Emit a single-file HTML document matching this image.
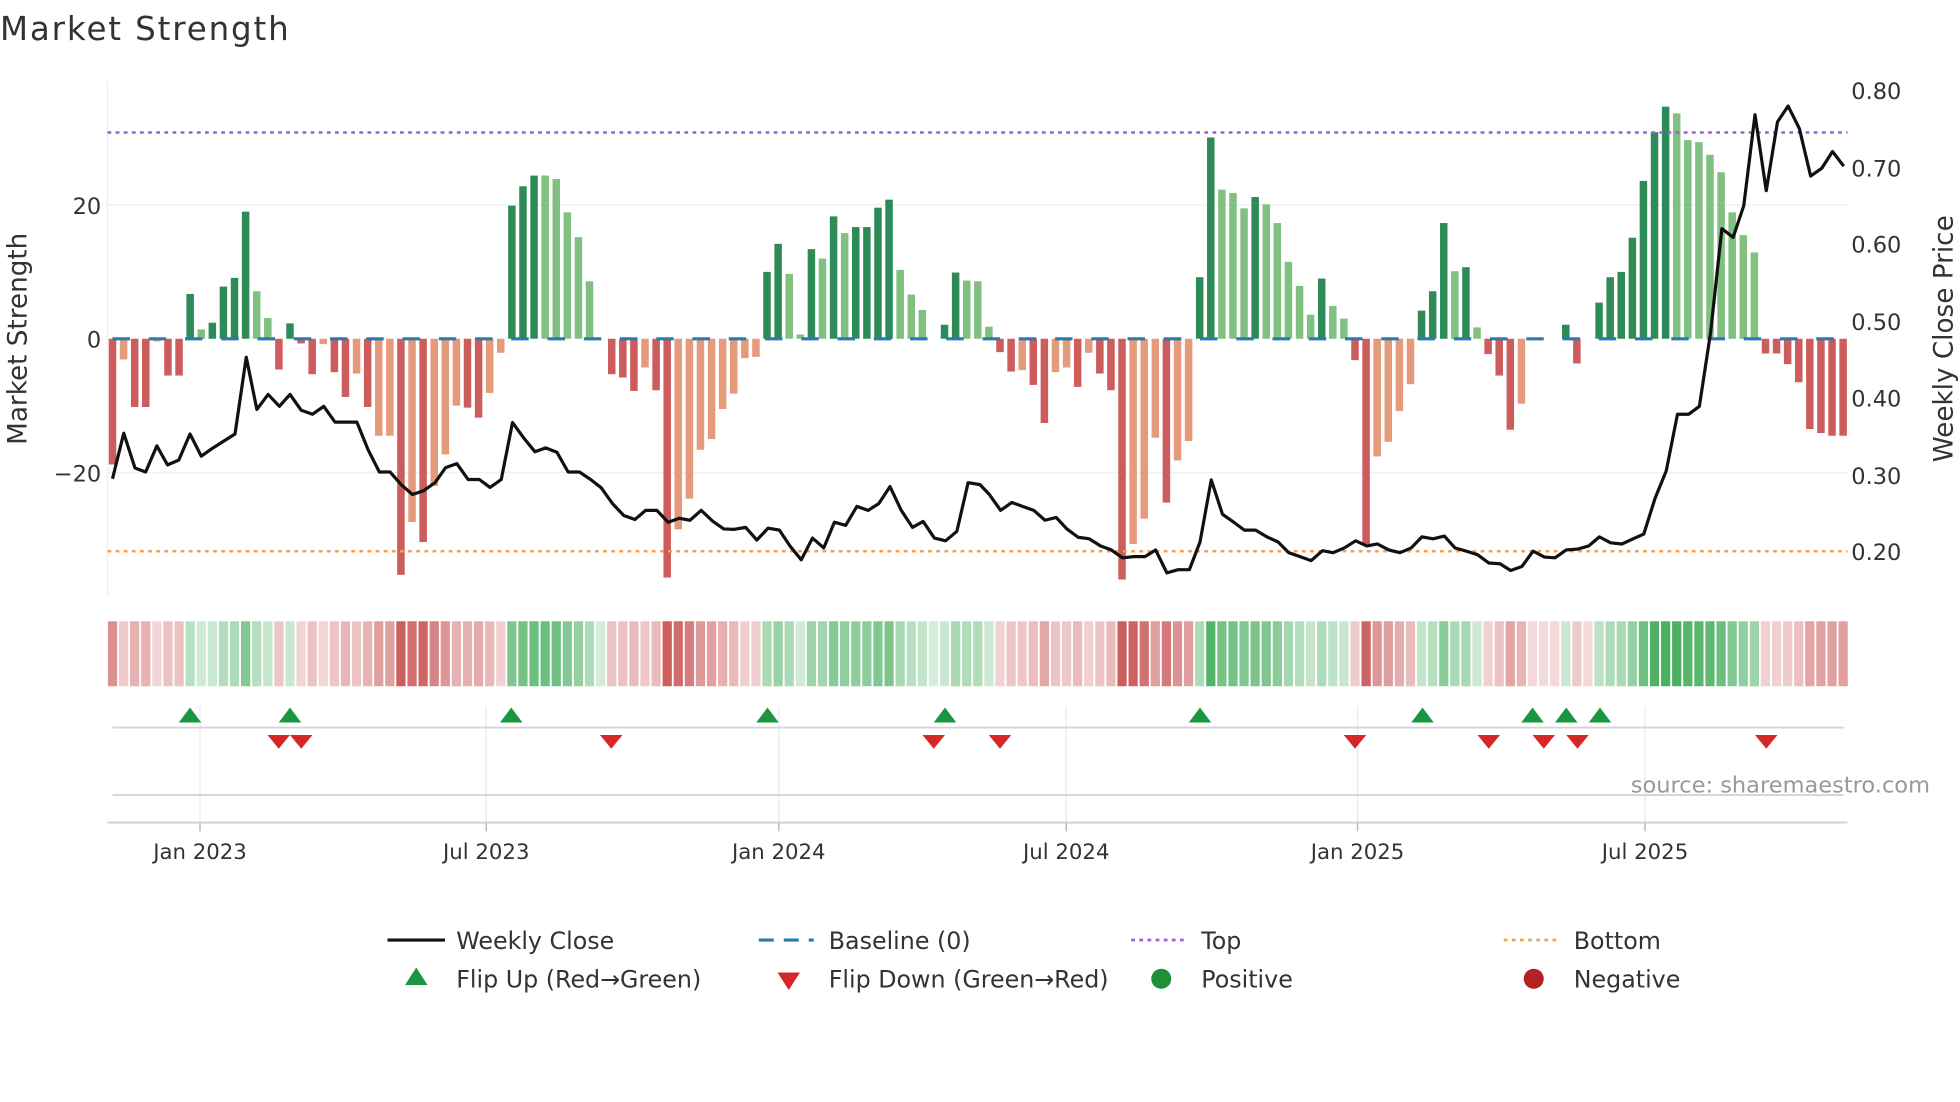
<!DOCTYPE html>
<html><head><meta charset="utf-8"><style>
html,body{margin:0;padding:0;background:#fff;width:1960px;height:1102px;overflow:hidden}
svg{display:block}
text{font-family:"DejaVu Sans","Liberation Sans",sans-serif;fill:#333}
</style></head><body>
<svg id="s" width="1960" height="1102" viewBox="0 0 1568 881.6" xmlns="http://www.w3.org/2000/svg">
<text x="0" y="32" font-size="26" textLength="231">Market Strength</text>
<g stroke="#eef0f3" stroke-width="1.2">
<line x1="86" y1="164" x2="1478" y2="164"/><line x1="86" y1="378" x2="1478" y2="378"/>
<line x1="86" y1="65" x2="86" y2="478"/>
</g>
<g id="bars"></g>
<line x1="86" y1="106" x2="1478" y2="106" stroke="#9b5fd6" stroke-width="2" stroke-dasharray="3,3.5"/>
<line x1="86" y1="441" x2="1478" y2="441" stroke="#f0a05a" stroke-width="2" stroke-dasharray="3,3.5"/>
<line x1="90" y1="271" x2="1478" y2="271" stroke="#2a7ab0" stroke-width="2.5" stroke-dasharray="14,15"/>
<g transform="scale(0.5 0.3165)">
<polyline fill="none" stroke="#111" stroke-width="3.2" vector-effect="non-scaling-stroke" stroke-linejoin="round" points="180,1210 198,1095 216,1183 233,1193 251,1127 268,1175 286,1163 304,1097 322,1153 340,1133 358,1115 376,1097 394,903 411,1035 429,997 447,1027 464,997 482,1037 500,1047 518,1027 536,1067 553,1067 571,1067 589,1137 607,1193 624,1193 642,1225 660,1250 678,1240 696,1220 713,1182 731,1172 749,1212 767,1212 784,1232 802,1212 820,1068 838,1107 856,1142 873,1132 891,1143 909,1193 927,1193 945,1212 962,1233 980,1273 998,1303 1016,1313 1033,1290 1051,1290 1069,1320 1087,1310 1104,1315 1122,1290 1140,1317 1158,1337 1175,1338 1193,1333 1211,1365 1229,1335 1247,1340 1264,1380 1282,1415 1300,1360 1318,1385 1335,1320 1353,1328 1371,1280 1389,1290 1406,1273 1424,1230 1442,1290 1460,1333 1477,1318 1495,1360 1513,1367 1531,1343 1549,1220 1568,1225 1583,1250 1601,1290 1619,1270 1636,1280 1654,1290 1672,1315 1690,1308 1707,1337 1725,1358 1743,1362 1761,1380 1778,1390 1796,1410 1814,1407 1832,1407 1849,1390 1867,1448 1885,1440 1903,1440 1920,1370 1938,1213 1956,1300 1974,1320 1991,1340 2009,1340 2027,1357 2045,1370 2062,1397 2080,1407 2098,1417 2116,1392 2133,1397 2151,1385 2169,1367 2187,1380 2204,1375 2222,1390 2240,1397 2258,1385 2275,1357 2293,1362 2311,1355 2328,1385 2346,1393 2364,1402 2382,1423 2400,1425 2417,1442 2435,1432 2453,1393 2471,1408 2488,1410 2506,1390 2524,1388 2542,1380 2559,1357 2577,1372 2595,1375 2613,1362 2630,1350 2648,1260 2666,1190 2684,1047 2702,1047 2719,1027 2737,840 2755,578 2773,600 2790,520 2808,290 2826,482 2844,308 2861,268 2879,325 2897,445 2915,425 2932,383 2950,420"/>
</g>
<g font-size="18">
<text x="81" y="171" text-anchor="end">20</text>
<text x="81" y="278" text-anchor="end">0</text>
<text x="81" y="385" text-anchor="end">−20</text>
<text x="1481" y="79">0.80</text><text x="1481" y="141">0.70</text><text x="1481" y="202">0.60</text>
<text x="1481" y="264">0.50</text><text x="1481" y="325">0.40</text><text x="1481" y="387">0.30</text>
<text x="1481" y="448">0.20</text>
</g>
<text transform="translate(21,271) rotate(-90)" font-size="21" text-anchor="middle">Market Strength</text>
<text transform="translate(1562,271) rotate(-90)" font-size="21" text-anchor="middle">Weekly Close Price</text>
<g id="strip"></g>
<g stroke="#e8eaee" stroke-width="1">
<line x1="160" y1="565" x2="160" y2="658"/><line x1="389" y1="565" x2="389" y2="658"/><line x1="623" y1="565" x2="623" y2="658"/>
<line x1="853" y1="565" x2="853" y2="658"/><line x1="1086" y1="565" x2="1086" y2="658"/><line x1="1316" y1="565" x2="1316" y2="658"/>
</g>
<line x1="90" y1="582" x2="1475" y2="582" stroke="#d4d4d4" stroke-width="1.5"/>
<line x1="90" y1="636" x2="1475" y2="636" stroke="#d4d4d4" stroke-width="1.5"/>
<line x1="86" y1="658" x2="1478" y2="658" stroke="#cfcfcf" stroke-width="1.5"/>
<g stroke="#bbb" stroke-width="1.2">
<line x1="160" y1="658" x2="160" y2="665"/><line x1="389" y1="658" x2="389" y2="665"/><line x1="623" y1="658" x2="623" y2="665"/>
<line x1="853" y1="658" x2="853" y2="665"/><line x1="1086" y1="658" x2="1086" y2="665"/><line x1="1316" y1="658" x2="1316" y2="665"/>
</g>
<g id="mk"></g>
<g font-size="17" text-anchor="middle">
<text x="160" y="687">Jan 2023</text><text x="389" y="687">Jul 2023</text><text x="623" y="687">Jan 2024</text>
<text x="853" y="687">Jul 2024</text><text x="1086" y="687">Jan 2025</text><text x="1316" y="687">Jul 2025</text>
</g>
<text x="1544" y="634" font-size="18" text-anchor="end" style="fill:#999">source: sharemaestro.com</text>
<line x1="310" y1="752" x2="356" y2="752" stroke="#111" stroke-width="2.5"/>
<line x1="607" y1="752" x2="651" y2="752" stroke="#2a7ab0" stroke-width="2.5" stroke-dasharray="12,8"/>
<line x1="905" y1="752" x2="950" y2="752" stroke="#9b5fd6" stroke-width="2.2" stroke-dasharray="3,3.5"/>
<line x1="1203" y1="752" x2="1248" y2="752" stroke="#f0a05a" stroke-width="2.2" stroke-dasharray="3,3.5"/>
<polygon points="333,774 324,788 342,788" fill="#1a9641"/>
<polygon points="631,792 622,778 640,778" fill="#d62728"/>
<circle cx="929" cy="783" r="8" fill="#1f8f3a"/>
<circle cx="1227" cy="783" r="8" fill="#b22222"/>
<g font-size="19">
<text x="365" y="759">Weekly Close</text><text x="663" y="759">Baseline (0)</text>
<text x="961" y="759">Top</text><text x="1259" y="759">Bottom</text>
<text x="365" y="790">Flip Up (Red→Green)</text><text x="663" y="790">Flip Down (Green→Red)</text>
<text x="961" y="790">Positive</text><text x="1259" y="790">Negative</text>
</g>
</svg>
<script>
var v="-18.8d,-3.1l,-10.2d,-10.2d,-0.4l,-5.5d,-5.5d,6.7d,1.4l,2.4d,7.8d,9.1d,19d,7.1l,3.1l,-4.6d,2.3d,-0.7d,-5.3d,-0.8l,-5d,-8.7d,-5.2l,-10.2d,-14.5l,-14.5l,-35.3d,-27.4l,-30.4d,-22l,-17.3l,-10l,-10.3d,-11.8d,-8.1l,-2.1l,19.9d,22.8d,24.4d,24.4l,23.9l,18.9l,15.2l,8.6l,0l,-5.3d,-5.8d,-7.8d,-4.3l,-7.7d,-35.7d,-28.5l,-23.9l,-16.6l,-15l,-10.5l,-8.2l,-2.9l,-2.7l,10d,14.2d,9.7l,0.65l,13.4d,12l,18.3d,15.8l,16.7d,16.7d,19.6d,20.8d,10.3l,6.6l,4.3l,0l,2.1d,9.9d,8.7l,8.6l,1.8l,-2d,-4.9d,-4.7l,-6.9d,-12.6d,-5l,-4.3l,-7.2d,-2.1l,-5.2d,-7.7d,-36d,-30.7l,-26.9l,-14.8l,-24.5d,-18.2l,-15.3l,9.2d,30.1d,22.3l,21.8l,19.5l,21.2d,20.1l,17.3l,11.5l,7.9l,3.6l,9d,4.9l,3l,-3.2d,-30.7d,-17.6l,-15.4l,-10.8l,-6.8l,4.2d,7.1d,17.3d,10.1l,10.7d,1.7l,-2.3d,-5.5d,-13.6d,-9.7l,0l,0l,0l,2.1d,-3.7d,0l,5.4d,9.2d,10d,15.1d,23.6d,30.9d,34.7d,33.7l,29.7l,29.4l,27.5l,24.9l,18.9l,15.5l,12.9l,-2.2d,-2.2d,-3.8d,-6.5d,-13.5d,-14.1d,-14.5d,-14.5d".split(",");
var NS="http://www.w3.org/2000/svg",B=document.getElementById("bars"),S=document.getElementById("strip");
function el(p,t,a){var e=document.createElementNS(NS,t);for(var k in a)e.setAttribute(k,a[k]);p.appendChild(e);return e;}
var prev=-1;
v.forEach(function(s,i){
 var val=parseFloat(s),d=s.slice(-1)=="d",x=90+8.875*i;
 if(val!=0){var h=Math.abs(val)*5.35,y=val>0?271-h:271;
  el(B,"rect",{x:x-3,y:y,width:6,height:h,fill:val>0?(d?"#2e8b57":"#80c080"):(d?"#cd5c5c":"#e59a7c")});}
 var sg=val>0?1:(val<0?-1:prev);prev=sg;
 var a=0.22+0.7*Math.min(1,Math.abs(val)/32);
 el(S,"rect",{x:x-4.4+0.7,y:497,width:7.4,height:52,fill:sg>0?"rgb(60,170,85)":"rgb(200,80,80)","fill-opacity":a.toFixed(2)});
});
var M=document.getElementById("mk");
[152,232,409,614,756,960,1138,1226,1253,1280].forEach(function(x){el(M,"polygon",{points:(x)+",566 "+(x-9)+",578 "+(x+9)+",578",fill:"#1a9641"});});
[223,241,489,747,800,1084,1191,1235,1262,1413].forEach(function(x){el(M,"polygon",{points:(x-9)+",588 "+(x+9)+",588 "+x+",599",fill:"#d62728"});});
</script>
</body></html>
